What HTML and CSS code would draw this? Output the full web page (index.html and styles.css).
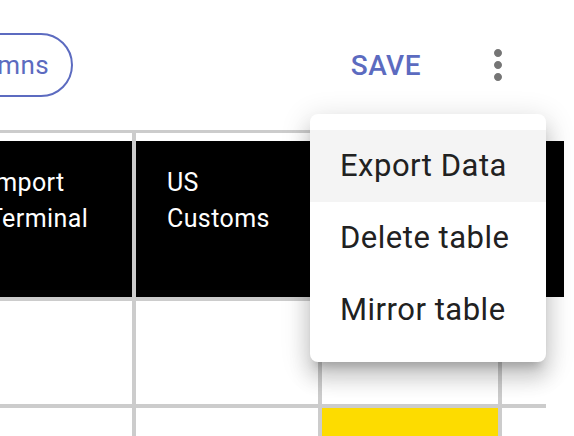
FILE: index.html
```html
<!DOCTYPE html>
<html lang="en">
<head>
<meta charset="utf-8">
<title>Table</title>
<link rel="stylesheet" href="styles.css">
</head>
<body>
  <header class="toolbar">
    <div class="toolbar-left">
      <button class="pill">Columns</button>
    </div>
    <div class="toolbar-right">
      <button class="save">SAVE</button>
      <button class="kebab" aria-label="More">
        <svg viewBox="0 0 24 24" width="48" height="48"><path fill="#757575" d="M12 8c1.1 0 2-.9 2-2s-.9-2-2-2-2 .9-2 2 .9 2 2 2zm0 2c-1.1 0-2 .9-2 2s.9 2 2 2 2-.9 2-2-.9-2-2-2zm0 6c-1.1 0-2 .9-2 2s.9 2 2 2 2-.9 2-2-.9-2-2-2z"/></svg>
      </button>
    </div>
  </header>

  <div class="grid">
    <div class="head"><div class="head-inner">Import<br>Terminal</div></div>
    <div class="head"><div class="head-inner">US<br>Customs</div></div>
    <div class="head"><div class="head-inner"></div></div>
    <div class="head"><div class="head-inner"></div></div>

    <div class="cell"></div>
    <div class="cell"></div>
    <div class="cell"></div>
    <div class="cell"></div>

    <div class="cell"></div>
    <div class="cell"></div>
    <div class="cell yellow"></div>
    <div class="cell"></div>
  </div>

  <div class="menu">
    <div class="menu-item active">Export Data</div>
    <div class="menu-item">Delete table</div>
    <div class="menu-item">Mirror table</div>
  </div>
</body>
</html>
```

FILE: styles.css
```css
html, body {
  margin: 0;
  padding: 0;
  background: #ffffff;
  overflow: hidden;
  font-family: Roboto, "Liberation Sans", Arial, sans-serif;
}

.toolbar {
  height: 130px;
  display: flex;
  align-items: center;
  justify-content: space-between;
}

.toolbar-left {
  width: 73px;
  display: flex;
  justify-content: flex-end;
}

.pill {
  flex-shrink: 0;
  height: 64px;
  box-sizing: border-box;
  border: 2px solid #5c6bc0;
  border-radius: 32px;
  background: #fff;
  color: #5c6bc0;
  font-family: Roboto, "Liberation Sans", Arial, sans-serif;
  font-size: 26px;
  letter-spacing: 0.4px;
  padding: 0 22px 0 26px;
  white-space: nowrap;
}

.toolbar-right {
  display: flex;
  align-items: center;
  padding-right: 52px;
}

.save {
  border: 0;
  background: none;
  padding: 0;
  margin-right: 53px;
  color: #5c6bc0;
  font-family: Roboto, "Liberation Sans", Arial, sans-serif;
  font-size: 28px;
  font-weight: 500;
  letter-spacing: 0.5px;
}

.kebab {
  border: 0;
  background: none;
  padding: 0;
  width: 48px;
  height: 48px;
  display: flex;
}

.grid {
  display: grid;
  grid-template-columns: 175px 182px 176px 44px;
  grid-template-rows: 164px 103px 103px;
  gap: 4px;
  background: #cccccc;
  border-top: 3px solid #cccccc;
  margin-left: -43px;
  width: 589px;
}

.head {
  background: #fff;
  padding-top: 8px;
  display: flex;
}

.head-inner {
  flex: 1;
  background: #000;
  color: #fff;
  font-size: 25px;
  letter-spacing: 0.4px;
  line-height: 36px;
  padding: 24px 31px;
}

.cell {
  background: #fff;
}

.cell.yellow {
  background: #fddc00;
}

.menu {
  position: absolute;
  left: 310px;
  top: 114px;
  width: 236px;
  padding: 16px 0;
  background: #fff;
  border-radius: 8px;
  box-shadow: 0 10px 10px -6px rgba(0,0,0,.2), 0 16px 20px 2px rgba(0,0,0,.14), 0 6px 28px 4px rgba(0,0,0,.12);
}

.menu-item {
  height: 72px;
  line-height: 72px;
  padding-left: 30px;
  font-size: 31px;
  letter-spacing: 0.5px;
  color: #212121;
  white-space: nowrap;
}

.menu-item.active {
  background: #f4f4f4;
}
```
